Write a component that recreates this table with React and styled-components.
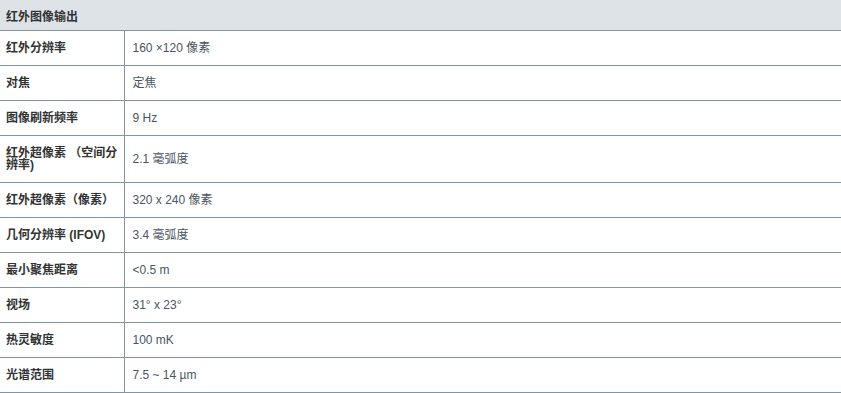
import React from "react";
import styled, { createGlobalStyle } from "styled-components";

const GlobalStyle = createGlobalStyle`
  body {
    margin: 0;
    background: #fff;
    font-family: "Liberation Sans", "Noto Sans CJK SC", sans-serif;
  }
`;

const SpecTable = styled.table`
  width: 841px;
  border-collapse: collapse;
  table-layout: fixed;
  font-size: 12px;
`;

const HeadCell = styled.th`
  height: 30px;
  padding: 0 6px;
  text-align: left;
  background: #dee3e7;
  color: #333;
  font-weight: bold;
  border-bottom: 1px solid #82969e;
`;

const Row = styled.tr`
  border-bottom: 1px solid #82969e;
`;

const Label = styled.td`
  width: 112px;
  height: ${({ $tall }) => ($tall ? "46px" : "34px")};
  padding: 0 6px;
  color: #333;
  font-weight: bold;
  line-height: 12px;
  border-right: 1px solid #82969e;
`;

const Value = styled.td`
  padding: 0 8px 1px;
  color: #4b5561;
  line-height: 14px;
`;

const specs = [
  ["红外分辨率", "160 ×120 像素"],
  ["对焦", "定焦"],
  ["图像刷新频率", "9 Hz"],
  ["红外超像素 （空间分辨率)", "2.1 毫弧度", true],
  ["红外超像素（像素）", "320 x 240 像素"],
  ["几何分辨率 (IFOV)", "3.4 毫弧度"],
  ["最小聚焦距离", "<0.5 m"],
  ["视场", "31° x 23°"],
  ["热灵敏度", "100 mK"],
  ["光谱范围", "7.5 ~ 14 µm"],
];

export default function App() {
  return (
    <>
      <GlobalStyle />
      <SpecTable>
        <colgroup>
          <col style={{ width: 124 }} />
          <col />
        </colgroup>
        <thead>
          <tr>
            <HeadCell colSpan={2}>红外图像输出</HeadCell>
          </tr>
        </thead>
        <tbody>
          {specs.map(([k, v, tall]) => (
            <Row key={k}>
              <Label $tall={tall}>{k}</Label>
              <Value>{v}</Value>
            </Row>
          ))}
        </tbody>
      </SpecTable>
    </>
  );
}
